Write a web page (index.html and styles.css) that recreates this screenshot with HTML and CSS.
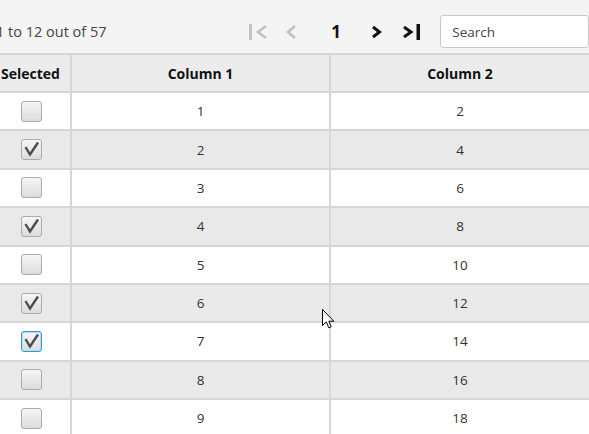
FILE: index.html
```html
<!DOCTYPE html>
<html>
<head>
<meta charset="utf-8">
<link rel="stylesheet" href="styles.css">
</head>
<body>
<div class="app">
  <div class="toolbar">
    <span class="info">1 to 12 out of 57</span>
    <div class="pager">
      <span class="pbtn first disabled">
        <svg width="20" height="18" viewBox="0 0 20 18"><rect x="0" y="1" width="3" height="16" fill="currentColor"/><path d="M17 3 L9 9 L17 15" fill="none" stroke="currentColor" stroke-width="2.6"/></svg>
      </span>
      <span class="pbtn prev disabled">
        <svg width="12" height="18" viewBox="0 0 12 18"><path d="M10 3 L3 9 L10 15" fill="none" stroke="currentColor" stroke-width="2.6"/></svg>
      </span>
      <span class="page">1</span>
      <span class="pbtn next">
        <svg width="12" height="18" viewBox="0 0 12 18"><path d="M2 4 L8.5 9 L2 14" fill="none" stroke="currentColor" stroke-width="3"/></svg>
      </span>
      <span class="pbtn last">
        <svg width="20" height="18" viewBox="0 0 20 18"><path d="M2 4 L9 9 L2 14" fill="none" stroke="currentColor" stroke-width="3"/><rect x="14.5" y="1" width="3.5" height="16" fill="currentColor"/></svg>
      </span>
    </div>
    <div class="search">Search</div>
  </div>
  <div class="table">
    <div class="row head">
      <div class="cell c0">Selected</div>
      <div class="cell c1">Column 1</div>
      <div class="cell c2">Column 2</div>
    </div>
    <div class="row"><div class="cell c0"><span class="cb"></span></div><div class="cell c1">1</div><div class="cell c2">2</div></div>
    <div class="row alt"><div class="cell c0"><span class="cb"><svg class="ck" viewBox="0 0 21 21"><path d="M4.5 8 L9 15.5 L17 3.5" fill="none" stroke="#4d4d4d" stroke-width="2.4"/></svg></span></div><div class="cell c1">2</div><div class="cell c2">4</div></div>
    <div class="row"><div class="cell c0"><span class="cb"></span></div><div class="cell c1">3</div><div class="cell c2">6</div></div>
    <div class="row alt"><div class="cell c0"><span class="cb"><svg class="ck" viewBox="0 0 21 21"><path d="M4.5 8 L9 15.5 L17 3.5" fill="none" stroke="#4d4d4d" stroke-width="2.4"/></svg></span></div><div class="cell c1">4</div><div class="cell c2">8</div></div>
    <div class="row"><div class="cell c0"><span class="cb"></span></div><div class="cell c1">5</div><div class="cell c2">10</div></div>
    <div class="row alt"><div class="cell c0"><span class="cb"><svg class="ck" viewBox="0 0 21 21"><path d="M4.5 8 L9 15.5 L17 3.5" fill="none" stroke="#4d4d4d" stroke-width="2.4"/></svg></span></div><div class="cell c1">6</div><div class="cell c2">12</div></div>
    <div class="row"><div class="cell c0"><span class="cb focused"><svg class="ck" viewBox="0 0 21 21"><path d="M4.5 8 L9 15.5 L17 3.5" fill="none" stroke="#4d4d4d" stroke-width="2.4"/></svg></span></div><div class="cell c1">7</div><div class="cell c2">14</div></div>
    <div class="row alt"><div class="cell c0"><span class="cb"></span></div><div class="cell c1">8</div><div class="cell c2">16</div></div>
    <div class="row"><div class="cell c0"><span class="cb"></span></div><div class="cell c1">9</div><div class="cell c2">18</div></div>
  </div>
  <svg class="cursor" width="14" height="21" viewBox="0 0 14 21"><path d="M0.5 0.5 L0.5 16.5 L4.3 12.9 L6.8 18.8 L9.2 17.8 L6.8 12.2 L11.8 12.2 Z" fill="#fff" stroke="#000" stroke-width="1"/></svg>
</div>
</body>
</html>
```

FILE: styles.css
```css
* { box-sizing: border-box; }
html, body { margin: 0; padding: 0; }
body {
  width: 589px;
  height: 434px;
  overflow: hidden;
  background: #fff;
  font-family: "Open Sans", "Noto Sans", sans-serif;
  font-size: 13.5px;
  color: #333;
}
.app { position: relative; width: 589px; height: 434px; overflow: hidden; }
.toolbar {
  height: 53px;
  background: #f4f4f4;
  display: flex;
  align-items: flex-start;
}
.info {
  margin-left: -4px;
  margin-top: 22px;
  font-size: 14.5px;
  line-height: 20px;
  color: #444;
  width: 253px;
  white-space: nowrap;
}
.pager {
  display: flex;
  align-items: center;
  height: 18px;
  margin-top: 23px;
}
.pbtn { display: flex; color: #111; }
.pbtn.disabled { color: #c2c2c2; }
.first { margin-left: 1px; }
.prev { margin-left: 16px; }
.page {
  margin-left: 34px;
  font-weight: 700;
  font-size: 17px;
  color: #111;
  width: 8px;
  line-height: 18px;
}
.next { margin-left: 32px; }
.last { margin-left: 19px; }
.search {
  margin-left: 18px;
  width: 149px;
  height: 33px;
  margin-top: 15px;
  border: 1px solid #c9c9c9;
  border-radius: 3px;
  background: #fff;
  padding-left: 11px;
  display: flex;
  align-items: center;
  font-size: 13.5px;
  color: #444;
}
.table { border-top: 2px solid #d6d6d6; }
.row {
  display: flex;
  height: 38.375px;
  border-bottom: 2px solid #d6d6d6;
  background: #fff;
}
.row.alt { background: #e9e9e9; }
.row.head {
  height: 38px;
  background: #ececec;
  font-weight: 700;
  font-size: 14px;
  color: #111;
}
.cell {
  display: flex;
  align-items: center;
  justify-content: center;
  white-space: nowrap;
}
.c0 { width: 72px; border-right: 2px solid #d6d6d6; }
.c1 { width: 259px; border-right: 2px solid #d6d6d6; }
.c2 { width: 258px; }
.head .c0 { justify-content: flex-start; padding-left: 1px; }
.row .c0 { justify-content: flex-start; padding-left: 21px; }
.row.head .c0 { padding-left: 1px; }
.cb {
  width: 21px;
  height: 21px;
  border: 1px solid #ababab;
  border-radius: 3px;
  background: linear-gradient(#f6f6f6, #dcdcdc);
  display: block;
  position: relative;
}
.cb.focused {
  border-color: #2e9bd6;
  box-shadow: inset 0 0 0 1px #b5dcf1;
}
.ck { position: absolute; left: -1px; top: -1px; width: 21px; height: 21px; }
.cursor { position: absolute; left: 322px; top: 309px; }
```
